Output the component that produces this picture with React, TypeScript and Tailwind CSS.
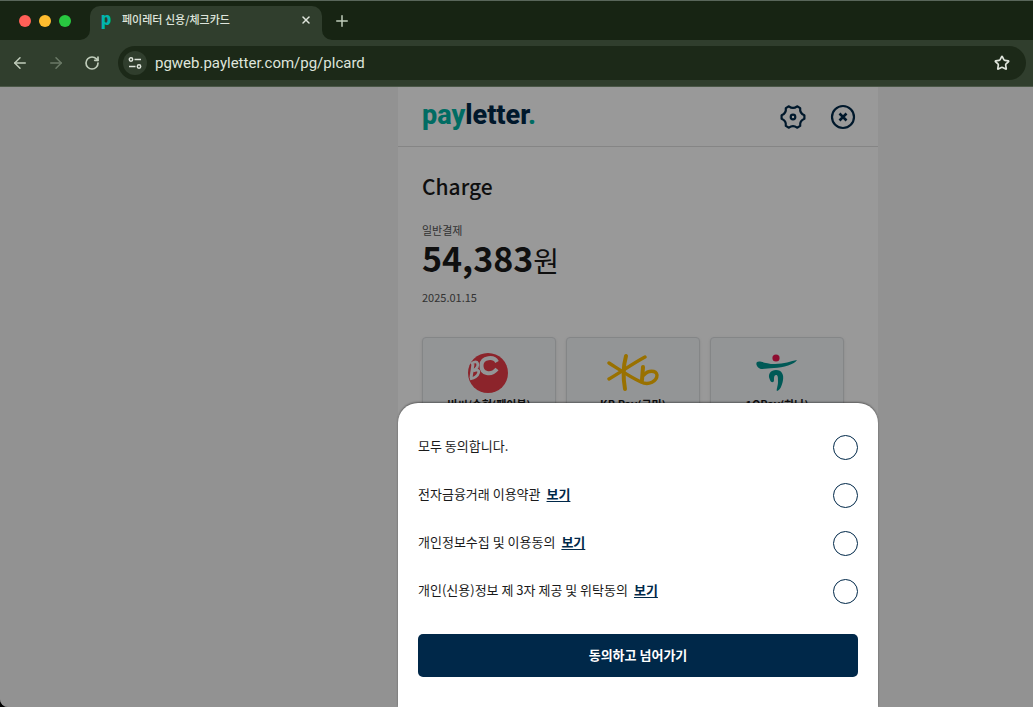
import React, { useState } from 'react';
import { ArrowLeft, ArrowRight, Plus, RotateCw, Star, X } from 'lucide-react';

interface Agreement {
    id: string;
    label: string;
}

const AGREEMENTS: Agreement[] = [
    { id: 'finance', label: '전자금융거래 이용약관' },
    { id: 'privacy', label: '개인정보수집 및 이용동의' },
    { id: 'thirdparty', label: '개인(신용)정보 제 3자 제공 및 위탁동의' },
];

const BcLogo = () => (
    <svg className="h-10 w-[52px]" viewBox="0 0 52 40" fill="none" aria-hidden="true">
        <circle cx="25" cy="20" r="20" fill="#e93d48" />
        <path d="M10 11 L8 25" stroke="#f6f8fb" strokeWidth="3" />
        <path d="M8 11 C15 5 18 13 10 18 C19 14 17 24 7 26" stroke="#f6f8fb" strokeWidth="2.800" />
        <path d="M34 9 C31 3 19 4 18.500 12 C18 21 28 23 34 16" stroke="#f6f8fb" strokeWidth="4" />
    </svg>
);

const KbLogo = () => (
    <svg className="h-10 w-[52px]" viewBox="0 0 52 40" fill="none" stroke="#ffbc00" strokeLinecap="round" strokeLinejoin="round" aria-hidden="true">
        <path d="M19 3 C16 14 16 25 18 36" strokeWidth="4" />
        <path d="M2 10 C13 17 23 24 34 29 C42 33 50 28 50 22 C49 17 41 17 37 22" strokeWidth="3.400" />
        <path d="M2 26 C14 19 25 11 38 4" strokeWidth="3.400" />
        <path d="M36 14 L35 27" strokeWidth="4" />
    </svg>
);

const HanaLogo = () => (
    <svg className="h-10 w-[52px]" viewBox="0 0 52 40" fill="none" aria-hidden="true">
        <circle cx="25" cy="5" r="3.600" fill="#ed1651" />
        <path d="M6 9 C9 7 14 11 24 11 C33 11 40 8 46 7 C44 11 32 15 23 15 C18 15 15 16 11 16 C7 16 4 11 6 9 Z" fill="#009490" />
        <path d="M19 27 C16 21 20 17 25 17 C31 17 33 22 32 27 C31 33 29 37 26 38 C25 37 27 33 27 29 C27 24 27 22 25 22 C23 22 23 25 23 27 C23 30 20 30 19 27 Z" fill="#009490" />
    </svg>
);

const CARDS = [
    { name: '비씨/수협(페이북)', logo: <BcLogo /> },
    { name: 'KB Pay(국민)', logo: <KbLogo /> },
    { name: '1QPay(하나)', logo: <HanaLogo /> },
];

const BrowserBar = () => (
    <header className="border-t border-[#59665a] bg-[#172413] text-[#dfe5dc]">
        <div className="flex h-[39px] items-end">
            <div className="flex h-full w-[80px] items-center gap-2 pl-[19px]">
                <span className="size-3 rounded-full bg-[#ff5f57]" />
                <span className="size-3 rounded-full bg-[#febc2e]" />
                <span className="size-3 rounded-full bg-[#28c840]" />
            </div>
            <svg className="size-[10px] text-[#303e2d]" viewBox="0 0 10 10" aria-hidden="true">
                <path d="M10 0 V10 H0 A10 10 0 0 0 10 0 Z" fill="currentColor" />
            </svg>
            <div className="flex h-[34px] w-[232px] items-center rounded-t-[10px] bg-[#303e2d] pr-[10px] pb-[6px] pl-[11px]">
                <span className="w-[21px] pb-0.5 font-['Roboto',sans-serif] text-[18px] leading-5 font-black text-[#00b5ad]">p</span>
                <span className="flex-1 pb-0.5 text-[11px] leading-4 font-medium">페이레터 신용/체크카드</span>
                <button type="button" aria-label="Close tab">
                    <X className="size-3" strokeWidth={3} />
                </button>
            </div>
            <svg className="size-[10px] text-[#303e2d]" viewBox="0 0 10 10" aria-hidden="true">
                <path d="M0 0 V10 H10 A10 10 0 0 1 0 0 Z" fill="currentColor" />
            </svg>
            <button type="button" aria-label="New tab" className="flex h-full w-5 items-center justify-center text-[#c0cdbb]">
                <Plus className="size-[18px]" />
            </button>
        </div>
        <div className="flex h-[47px] items-center border-b border-[#4a5747] bg-[#303e2d] pr-[7px] pl-[11px]">
            <button type="button" aria-label="Back" className="w-9 text-[#c0cdbb]">
                <ArrowLeft className="size-[18px]" />
            </button>
            <button type="button" aria-label="Forward" className="w-9 text-[#6b7a67]">
                <ArrowRight className="size-[18px]" />
            </button>
            <button type="button" aria-label="Reload" className="w-[35px] pl-px text-[#c0cdbb]">
                <RotateCw className="size-4" strokeWidth={2.5} />
            </button>
            <div className="flex h-[34px] flex-1 items-center rounded-full bg-[#1c2918] pr-4 pl-[5px]">
                <span className="flex size-6 items-center justify-center rounded-full bg-[#303e2d]">
                    <svg className="size-[14px]" viewBox="0 0 14 14" fill="none" stroke="currentColor" strokeWidth="1.500" aria-hidden="true">
                        <circle cx="3" cy="3.500" r="1.700" />
                        <path d="M6.500 3.500 H13" />
                        <circle cx="11" cy="10.500" r="1.700" />
                        <path d="M1 10.500 H7.500" />
                    </svg>
                </span>
                <input
                    aria-label="Address"
                    className="min-w-0 flex-1 bg-transparent pl-2 font-['Roboto',sans-serif] text-[15px] leading-6 outline-none"
                    defaultValue="pgweb.payletter.com/pg/plcard"
                />
                <button type="button" aria-label="Bookmark">
                    <Star className="size-4" strokeWidth={2.5} />
                </button>
            </div>
        </div>
    </header>
);

const Charge = () => (
    <section className="bg-white text-[#1a1a1a]">
        <div className="flex h-[60px] items-center justify-between border-b border-[#dedede] pr-[22px] pl-6">
            <h1 className="pb-1 font-['Roboto',sans-serif] text-[27px] leading-8 font-extrabold text-[#002849]">
                <span className="text-[#00b5a5]">pay</span>letter<span className="text-[#00b5a5]">.</span>
            </h1>
            <div className="flex gap-6 text-[#002849]">
                <button type="button" aria-label="Settings">
                    <svg className="size-[26px]" viewBox="0 0 26 26" fill="none" stroke="currentColor" strokeWidth="2.200" strokeLinejoin="round" aria-hidden="true">
                        <path d="M24.400 14.800 V11.200 Q19.500 9.200 20.200 4.100 L17.100 2.300 Q13 5.500 8.900 2.300 L5.800 4.100 Q6.500 9.200 1.600 11.200 V14.800 Q6.500 16.800 5.800 21.900 L8.900 23.700 Q13 20.500 17.100 23.700 L20.200 21.900 Q19.500 16.800 24.400 14.800 Z" />
                        <circle cx="13" cy="13" r="2.300" />
                    </svg>
                </button>
                <button type="button" aria-label="Close">
                    <svg className="size-[26px]" viewBox="0 0 26 26" fill="none" stroke="currentColor" strokeWidth="2.200" aria-hidden="true">
                        <circle cx="13" cy="13" r="11" />
                        <path d="M9.500 9.500 L16.500 16.500 M16.500 9.500 L9.500 16.500" strokeWidth="2.600" />
                    </svg>
                </button>
            </div>
        </div>
        <div className="pt-[23px] pr-[34px] pl-6">
            <h2 className="text-[21px] leading-8 font-medium">Charge</h2>
            <p className="mt-5 text-[11px] leading-4 text-[#555]">일반결제</p>
            <p className="text-[34px] leading-10 font-bold">
                54,383<span className="text-[28px] font-normal">원</span>
            </p>
            <p className="mt-[9px] text-[11px] leading-4 text-[#555]">2025.01.15</p>
            <div className="mt-8 grid grid-cols-3 gap-[10px]">
                {CARDS.map((card) => (
                    <button
                        key={card.name}
                        type="button"
                        className="flex h-[84px] flex-col items-center rounded-[4px] border border-[#dcdfe2] bg-[#f6f8fb] pt-[15px] shadow-sm"
                    >
                        {card.logo}
                        <span className="mt-[3px] text-[11px] leading-4 font-bold">{card.name}</span>
                    </button>
                ))}
            </div>
        </div>
    </section>
);

const checkStyle = 'size-[25px] shrink-0 appearance-none rounded-full border border-[#002849] checked:bg-[#002849]';

const AgreementSheet = () => {
    const [checked, setChecked] = useState<string[]>([]);
    const allChecked = checked.length === AGREEMENTS.length;

    const toggle = (id: string) => {
        setChecked(checked.includes(id) ? checked.filter((c) => c !== id) : [...checked, id]);
    };

    return (
        <form className="rounded-t-[20px] bg-white px-5 pt-5 pb-[30px] text-[13px] leading-5 text-[#1a1a1a] shadow-[0_-1px_2px_rgba(0,0,0,0.4)]">
            <div className="flex h-12 items-center justify-between">
                <label htmlFor="all" className="pb-0.5">모두 동의합니다.</label>
                <input
                    id="all"
                    type="checkbox"
                    className={checkStyle}
                    checked={allChecked}
                    onChange={() => setChecked(allChecked ? [] : AGREEMENTS.map((a) => a.id))}
                />
            </div>
            {AGREEMENTS.map((item) => (
                <div key={item.id} className="flex h-12 items-center">
                    <label htmlFor={item.id} className="pb-0.5">{item.label}</label>
                    <a href="#terms" className="ml-[6px] flex-1 pb-0.5 font-bold text-[#002849]">
                        <span className="underline underline-offset-2">보기</span>
                    </a>
                    <input
                        id={item.id}
                        type="checkbox"
                        className={checkStyle}
                        checked={checked.includes(item.id)}
                        onChange={() => toggle(item.id)}
                    />
                </div>
            ))}
            <button type="button" className="mt-[19px] h-[43px] w-full rounded-[5px] bg-[#002849] pb-0.5 font-bold text-white">
                동의하고 넘어가기
            </button>
        </form>
    );
};

const App: React.FC = () => {
    return (
        <div className="flex h-screen flex-col overflow-hidden bg-black font-['Noto_Sans_CJK_KR',sans-serif]">
            <BrowserBar />
            <main className="relative flex-1 overflow-hidden rounded-bl-[8px] bg-[#f4f4f4]">
                <div className="grid h-full grid-cols-[398fr_480px_155fr]">
                    <div className="col-start-2 grid">
                        <Charge />
                    </div>
                </div>
                <div className="absolute inset-0 grid grid-cols-[398fr_480px_155fr] items-end bg-black/40">
                    <div className="col-start-2">
                        <AgreementSheet />
                    </div>
                </div>
            </main>
        </div>
    );
};

export default App;
